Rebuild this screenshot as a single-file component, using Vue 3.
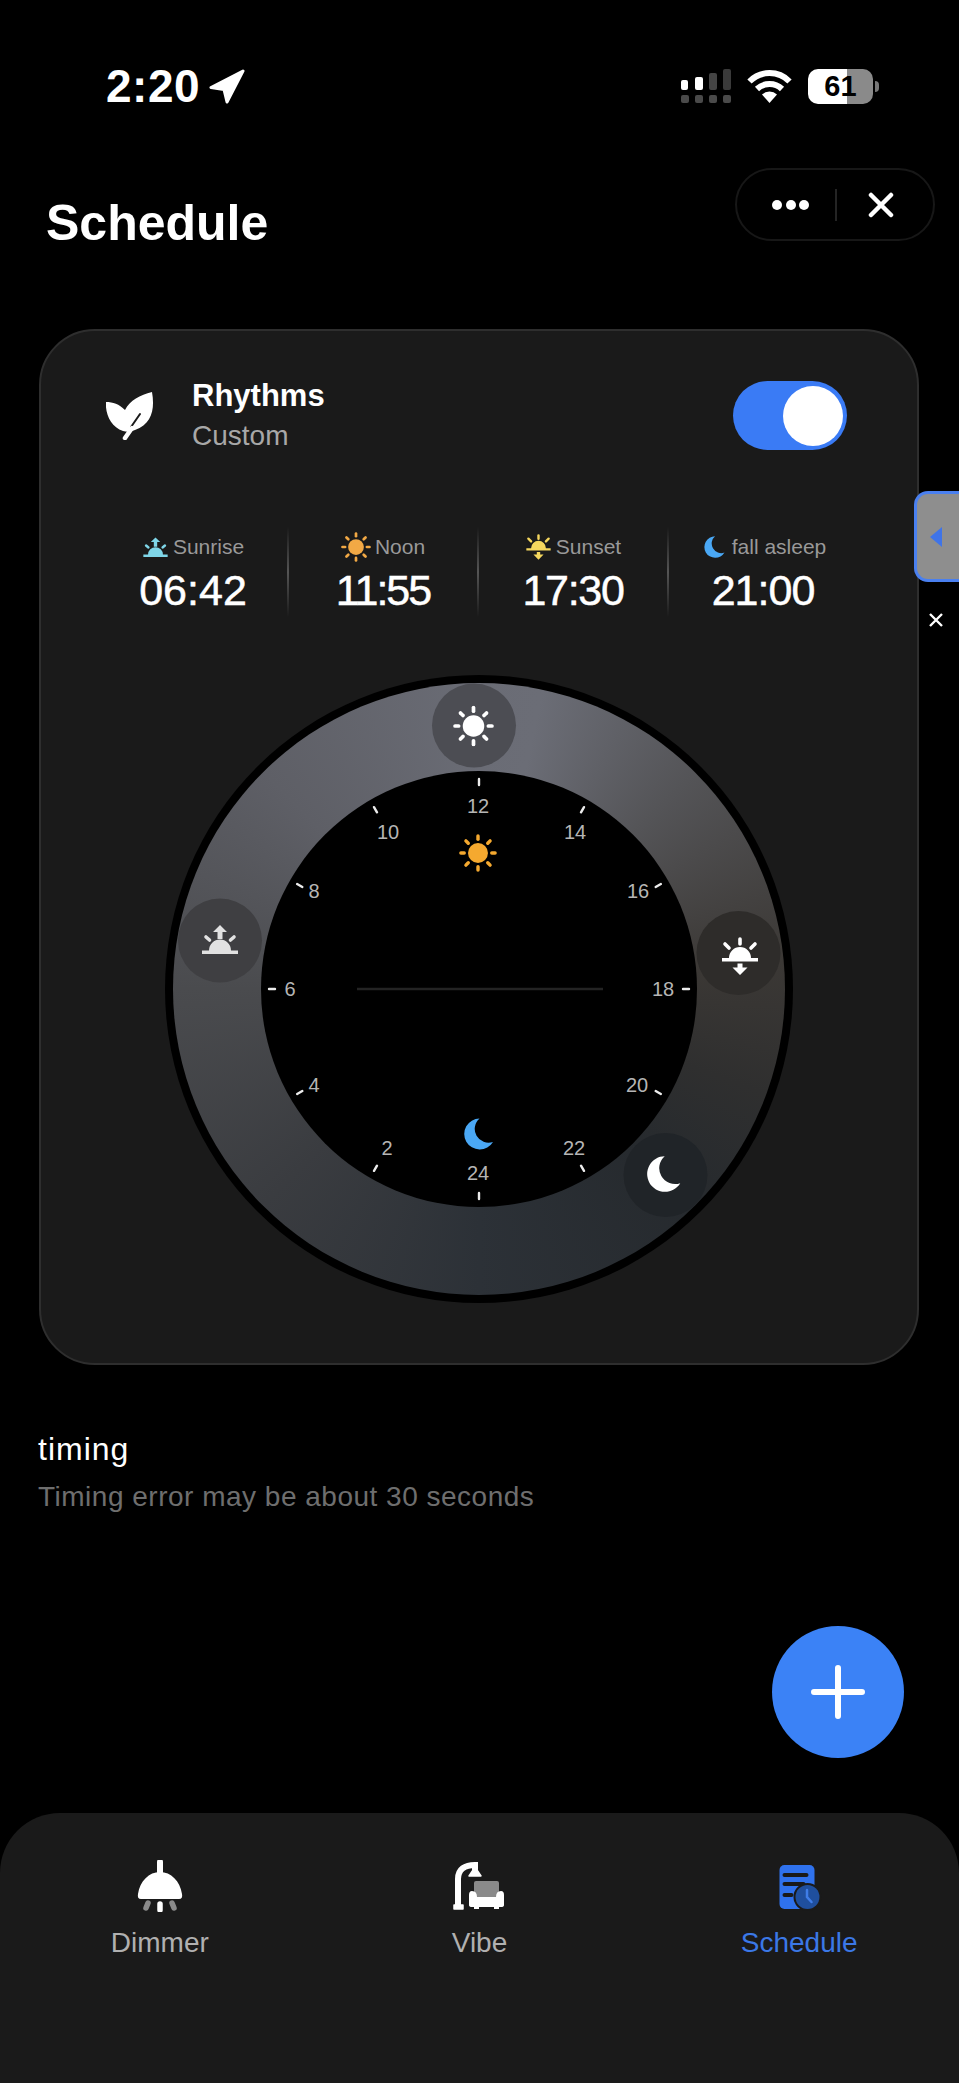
<template>
  <div class="page">
    <!-- shared icon shapes -->
    <svg class="defs" aria-hidden="true">
      <symbol id="ic-sun" viewBox="-20 -20 40 40">
        <circle r="10.5" fill="currentColor" />
        <line
          v-for="r in sunRays"
          :key="r.x1"
          :x1="r.x1"
          :y1="r.y1"
          :x2="r.x2"
          :y2="r.y2"
          stroke="currentColor"
          stroke-width="3.600"
          stroke-linecap="round"
        />
      </symbol>
      <symbol id="ic-sunrise" viewBox="-20 -20 40 40">
        <path fill="currentColor" d="M-11 10.500A11 11 0 0 1 11 10.500ZM-18 10.500H18V14H-18ZM0 -15L7 -8H2.500V-1H-2.500V-8H-7Z" />
        <path stroke="currentColor" stroke-width="3.600" stroke-linecap="round" d="M-14 -3L-10.500 0M14 -3L10.500 0" />
      </symbol>
      <symbol id="ic-sunset" viewBox="-20 -20 40 40">
        <path fill="currentColor" d="M-11 1A11 11 0 0 1 11 1ZM-18 1H18V4.500H-18ZM-2.500 6.500H2.500V10.500H7.500L0 18L-7.500 10.500H-2.500Z" />
        <path stroke="currentColor" stroke-width="3.600" stroke-linecap="round" d="M0 -18V-13M-15 -13L-11 -9M15 -13L11 -9" />
      </symbol>
      <symbol id="ic-moon" viewBox="-20 -20 40 40">
        <path fill="currentColor" d="M1.500 -15.500A15.500 15.500 0 1 0 15 8A13.800 13.800 0 0 1 1.500 -15.500Z" />
      </symbol>
    </svg>

    <div class="status">
      <div class="status-left">
        <span class="clock">2:20</span>
        <svg class="loc" width="36" height="35" viewBox="0 0 36 35">
          <path d="M34 2L2 18.500L15 20.500L18 33Z" fill="#fff" stroke="#fff" stroke-width="3" stroke-linejoin="round" />
        </svg>
      </div>
      <div class="status-right">
        <svg width="50" height="35" viewBox="0 0 50 35">
          <rect x="0" y="11" width="7" height="10" rx="2" fill="#fff" />
          <rect x="14" y="8" width="8" height="13" rx="2" fill="#fff" />
          <rect x="28" y="4" width="8" height="17" rx="2" fill="#444" />
          <rect x="42" y="0" width="8" height="21" rx="2" fill="#3a3a3a" />
          <rect v-for="x in [0, 14, 28, 42]" :key="x" :x="x" y="26" width="8" height="8" rx="2" fill="#4a4a4a" />
        </svg>
        <svg width="45" height="33" viewBox="0 0 45 33">
          <path d="M2.500 11.500A28 28 0 0 1 42.500 11.500M10 19A18 18 0 0 1 35 19" fill="none" stroke="#fff" stroke-width="6" />
          <path d="M22.500 33L15 24.500A11 11 0 0 1 30 24.500Z" fill="#fff" />
        </svg>
        <div class="battery">61</div>
      </div>
    </div>

    <div class="top">
      <h1 class="title">Schedule</h1>
      <div class="capsule">
        <div class="dots"><i /><i /><i /></div>
        <span class="cap-line" />
        <svg width="26" height="26" viewBox="0 0 26 26">
          <path d="M3 3L23 23M23 3L3 23" stroke="#fff" stroke-width="4.500" stroke-linecap="round" />
        </svg>
      </div>
    </div>

    <section class="card">
      <div class="card-head">
        <svg class="leaf" width="48" height="48" viewBox="10 11 48 48">
          <path fill="#fff" d="M56 11C59 28 56 43 39 49C34 51 31 51 27 50C15 46 9 33 10 21C17 21 23 23 29 29C34 19 44 14 56 11Z" />
          <path d="M44 33L35 46" stroke="#1a1a1a" stroke-width="2" stroke-linecap="round" />
          <path d="M36 47L29 57" stroke="#fff" stroke-width="4.500" stroke-linecap="round" />
        </svg>
        <div class="head-text">
          <div class="head-name">Rhythms</div>
          <div class="head-sub">Custom</div>
        </div>
        <div class="toggle"><span /></div>
      </div>

      <div class="stats">
        <div v-for="s in stats" :key="s.label" class="stat">
          <div class="stat-label">
            <svg :width="s.size" :height="s.size" :style="{ color: s.color }"><use :href="s.icon" /></svg>
            <span>{{ s.label }}</span>
          </div>
          <div class="stat-time" :style="{ letterSpacing: s.tight + 'px' }">{{ s.time }}</div>
        </div>
      </div>

      <div class="dial">
        <div class="ring"><div class="face" /></div>
        <svg class="overlay" width="628" height="628" viewBox="0 0 628 628">
          <line x1="192" y1="314" x2="438" y2="314" stroke="#232323" stroke-width="2.500" />
          <line
            v-for="t in ticks"
            :key="t.h"
            :x1="t.x1"
            :y1="t.y1"
            :x2="t.x2"
            :y2="t.y2"
            stroke="#ececec"
            stroke-width="2.400"
            stroke-linecap="round"
          />
          <text
            v-for="l in labels"
            :key="l.t"
            class="hour"
            :x="314 + l.x"
            :y="314 + l.y"
            text-anchor="middle"
            dominant-baseline="central"
          >{{ l.t }}</text>
          <circle v-for="k in knobs" :key="k.id" :cx="k.x" :cy="k.y" r="42" :fill="k.fill" />
          <use
            v-for="k in knobs"
            :key="k.id"
            :href="k.id"
            :x="k.ix - k.size / 2"
            :y="k.iy - k.size / 2"
            :width="k.size"
            :height="k.size"
            :style="{ color: k.color }"
          />
          <use href="#ic-sun" x="294" y="159" width="38" height="38" style="color: #f5a92f" />
          <use href="#ic-moon" x="293" y="439" width="40" height="40" style="color: #4aa8f5" />
        </svg>
      </div>
    </section>

    <div class="timing">
      <div class="timing-title">timing</div>
      <div class="timing-sub">Timing error may be about 30 seconds</div>
    </div>

    <!-- floating things on top -->
    <div class="side-tab"><span /></div>
    <svg class="side-x" width="16" height="16" viewBox="0 0 16 16">
      <path d="M2 2L14 14M14 2L2 14" stroke="#fff" stroke-width="2.400" />
    </svg>
    <button class="fab">
      <svg width="54" height="54" viewBox="0 0 54 54">
        <path d="M27 3V51M3 27H51" stroke="#fff" stroke-width="6" stroke-linecap="round" />
      </svg>
    </button>

    <nav class="tabbar">
      <div class="tab">
        <svg width="80" height="52" viewBox="0 10 80 52">
          <path d="M40 12V25" stroke="#fff" stroke-width="6" stroke-linecap="round" />
          <path fill="#fff" d="M18 44C20 31 29 22 40 22C51 22 60 31 62 44Q63 49 59 49H21Q17 49 18 44Z" />
          <path d="M40 54V60" stroke="#fff" stroke-width="5.500" stroke-linecap="round" />
          <path d="M28 53L26 58M52 53L54 58" stroke="#8a8a8a" stroke-width="5.500" stroke-linecap="round" />
        </svg>
        <span>Dimmer</span>
      </div>
      <div class="tab">
        <svg width="70" height="52" viewBox="0 5 70 52">
          <path d="M14 51V24C14 14 21 10 31 10V14" fill="none" stroke="#fff" stroke-width="6" stroke-linecap="round" />
          <path d="M10 50H19V54H10ZM25 21L31 12L37 21Z" fill="#fff" stroke="#fff" stroke-width="1.500" stroke-linejoin="round" />
          <rect x="30" y="26" width="25" height="17" rx="2" fill="#8a8a8a" />
          <path fill="#fff" d="M28 36Q33 36 33 42H52Q52 36 57 36Q60 36 60 40V50Q60 52 57 52H55V54H50V52H35V54H30V52H28Q25 52 25 50V40Q25 36 28 36Z" />
        </svg>
        <span>Vibe</span>
      </div>
      <div class="tab tab-active">
        <svg width="60" height="52" viewBox="1.500 0 60 52">
          <rect x="12" y="5" width="35" height="44" rx="5" fill="#2f72ee" />
          <path d="M17 15H39M17 24H36M17 35H24" stroke="#1a1a1a" stroke-width="4" stroke-linecap="round" />
          <circle cx="40" cy="37" r="14" fill="#1a1a1a" />
          <circle cx="40" cy="37" r="12" fill="#1f4f9e" />
          <path d="M39.500 30V37L44 42" fill="none" stroke="#3f7de8" stroke-width="2.500" stroke-linecap="round" />
        </svg>
        <span>Schedule</span>
      </div>
    </nav>
  </div>
</template>

<script setup>
const pointOn = (deg, r) => {
  const a = (deg * Math.PI) / 180
  return [Math.sin(a) * r, -Math.cos(a) * r]
}

const sunRays = [0, 45, 90, 135, 180, 225, 270, 315].map((deg) => {
  const [x1, y1] = pointOn(deg, 14.5)
  const [x2, y2] = pointOn(deg, 18)
  return { x1, y1, x2, y2 }
})

const stats = [
  { label: 'Sunrise', time: '06:42', icon: '#ic-sunrise', size: 27, color: '#7fd6e8', tight: 0 },
  { label: 'Noon', time: '11:55', icon: '#ic-sun', size: 30, color: '#f2a945', tight: -2 },
  { label: 'Sunset', time: '17:30', icon: '#ic-sunset', size: 27, color: '#f5d75e', tight: -1.3 },
  { label: 'fall asleep', time: '21:00', icon: '#ic-moon', size: 28, color: '#4aa8f5', tight: -1 }
]

// 12 is at the top, 18 on the right
const ticks = [2, 4, 6, 8, 10, 12, 14, 16, 18, 20, 22, 24].map((h) => {
  const deg = (h - 12) * 15
  const [ax, ay] = pointOn(deg, 204)
  const [bx, by] = pointOn(deg, 210)
  return { h, x1: 314 + ax, y1: 314 + ay, x2: 314 + bx, y2: 314 + by }
})

const labels = [
  { t: '12', x: -1, y: -183 },
  { t: '14', x: 96, y: -157 },
  { t: '16', x: 159, y: -98 },
  { t: '18', x: 184, y: 0 },
  { t: '20', x: 158, y: 96 },
  { t: '22', x: 95, y: 159 },
  { t: '24', x: -1, y: 184 },
  { t: '2', x: -92, y: 159 },
  { t: '4', x: -165, y: 96 },
  { t: '6', x: -189, y: 0 },
  { t: '8', x: -165, y: -98 },
  { t: '10', x: -91, y: -157 }
]

const knobs = [
  { id: '#ic-sun', x: 309, y: 50.5, ix: 308.5, iy: 51, size: 41, fill: '#4c4d53', color: '#fff' },
  { id: '#ic-sunrise', x: 55, y: 265.5, ix: 55, iy: 265, size: 40, fill: '#3f3f42', color: '#e2e2e2' },
  { id: '#ic-sunset', x: 573.5, y: 278, ix: 575, iy: 282, size: 40, fill: '#2e2c2a', color: '#fff' },
  { id: '#ic-moon', x: 500.5, y: 500, ix: 498, iy: 499, size: 46, fill: '#202428', color: '#fff' }
]
</script>

<style>
html,
body {
  background: #000;
}
</style>

<style scoped>
.page {
  position: relative;
  width: 959px;
  height: 2083px;
  display: flex;
  flex-direction: column;
  overflow: hidden;
  background: #000;
  color: #fff;
  font-family: "Liberation Sans", Arial, sans-serif;
}

.defs {
  position: absolute;
  width: 0;
  height: 0;
}

/* status bar */
.status {
  display: flex;
  justify-content: space-between;
  align-items: center;
  height: 35px;
  margin-top: 69px;
  padding: 0 86px 0 106px;
}

.status-left {
  display: flex;
  align-items: center;
  gap: 9px;
}

.clock {
  font-size: 46px;
  font-weight: 700;
  line-height: 35px;
  letter-spacing: 0.5px;
}

.status-right {
  display: flex;
  align-items: center;
  gap: 16px;
}

.battery {
  position: relative;
  width: 65px;
  height: 35px;
  border-radius: 10px;
  background: linear-gradient(90deg, #fff 60%, #8a8a8a 60%);
  color: #000;
  font-size: 29px;
  font-weight: 700;
  line-height: 35px;
  text-align: center;
}

.battery::after {
  content: '';
  position: absolute;
  top: 12px;
  right: -6px;
  width: 4px;
  height: 11px;
  border-radius: 0 4px 4px 0;
  background: #777;
}

/* title row */
.top {
  display: flex;
  justify-content: space-between;
  align-items: flex-start;
  margin-top: 64px;
  padding: 0 24px 0 46px;
}

.title {
  margin: 30px 0 0;
  font-size: 50px;
  font-weight: 700;
  line-height: 50px;
}

.capsule {
  display: flex;
  align-items: center;
  box-sizing: border-box;
  width: 200px;
  height: 73px;
  padding-left: 35px;
  border: 2px solid #171717;
  border-radius: 37px;
}

.dots {
  display: flex;
  gap: 3.5px;
}

.dots i {
  width: 10px;
  height: 10px;
  border-radius: 50%;
  background: #fff;
}

.cap-line {
  width: 2px;
  height: 32px;
  margin: 0 31px 0 26px;
  background: #242424;
}

/* card */
.card {
  box-sizing: border-box;
  width: 880px;
  margin: 81px 0 0 39px;
  padding: 47px 0 60px;
  border: 2px solid #2e2e2e;
  border-radius: 56px;
  background: #1a1a1a;
}

.card-head {
  display: flex;
  align-items: center;
  padding: 0 70px 0 65px;
}

.leaf {
  flex: none;
}

.head-text {
  flex: 1;
  margin-left: 38px;
}

.head-name {
  margin-bottom: 5px;
  font-size: 31px;
  font-weight: 700;
  line-height: 36px;
}

.head-sub {
  color: #a8a8a8;
  font-size: 28px;
  line-height: 34px;
}

.toggle {
  display: flex;
  justify-content: flex-end;
  align-items: center;
  width: 114px;
  height: 69px;
  padding-right: 4px;
  box-sizing: border-box;
  border-radius: 35px;
  background: #3a7bf5;
}

.toggle span {
  width: 60px;
  height: 60px;
  border-radius: 50%;
  background: #fff;
}

.stats {
  display: grid;
  grid-template-columns: repeat(4, 190px);
  margin: 74px 0 0 57px;
}

.stat {
  position: relative;
  box-sizing: border-box;
  height: 90px;
  padding-top: 6px;
  text-align: center;
}

.stat + .stat::before {
  content: '';
  position: absolute;
  top: 0;
  bottom: 0;
  left: -1px;
  width: 2px;
  background: linear-gradient(180deg, transparent, #555 50%, transparent);
}

.stat-label {
  display: flex;
  justify-content: center;
  align-items: center;
  gap: 4px;
  height: 28px;
  color: #999;
  font-size: 21px;
  line-height: 28px;
}

.stat-time {
  margin-top: 6px;
  font-size: 43px;
  line-height: 46px;
  -webkit-text-stroke: 0.5px #fff;
}

/* dial */
.dial {
  position: relative;
  box-sizing: border-box;
  width: 628px;
  height: 628px;
  margin: 58px auto 0;
  padding: 8px;
  border-radius: 50%;
  background: #000;
}

.ring {
  display: flex;
  justify-content: center;
  align-items: center;
  width: 100%;
  height: 100%;
  border-radius: 50%;
  background: conic-gradient(
    #6a6c75 0deg,
    #6b6d76 12deg,
    #545457 45deg,
    #3b3835 85deg,
    #2f2f2f 110deg,
    #262a2e 135deg,
    #2c3137 180deg,
    #3a3c40 225deg,
    #4a4b4e 270deg,
    #5e5f66 315deg,
    #6a6c75 360deg
  );
}

.face {
  width: 436px;
  height: 436px;
  border-radius: 50%;
  background: #000;
}

.overlay {
  position: absolute;
  top: 0;
  left: 0;
}

.hour {
  fill: #b5b5b5;
  font-size: 20px;
}

/* timing */
.timing {
  margin-top: 65px;
  padding-left: 38px;
}

.timing-title {
  font-size: 32px;
  line-height: 38px;
  letter-spacing: 1px;
}

.timing-sub {
  margin-top: 12px;
  color: #6e6e6e;
  font-size: 28px;
  line-height: 34px;
  letter-spacing: 0.5px;
}

/* overlays */
.side-tab {
  position: absolute;
  top: 491px;
  right: 0;
  display: flex;
  align-items: center;
  box-sizing: border-box;
  width: 45px;
  height: 91px;
  padding-left: 13px;
  border: 3px solid #4a80f0;
  border-right: 0;
  border-radius: 14px 0 0 14px;
  background: #8e8e8e;
}

.side-tab span {
  border-top: 10px solid transparent;
  border-right: 12px solid #3f74e8;
  border-bottom: 10px solid transparent;
}

.side-x {
  position: absolute;
  top: 612px;
  left: 928px;
}

.fab {
  position: absolute;
  top: 1626px;
  left: 772px;
  display: flex;
  justify-content: center;
  align-items: center;
  width: 132px;
  height: 132px;
  padding: 0;
  border: 0;
  border-radius: 50%;
  background: #3b82f6;
}

/* bottom tabs */
.tabbar {
  display: grid;
  grid-template-columns: repeat(3, 1fr);
  height: 270px;
  margin-top: auto;
  border-radius: 60px 60px 0 0;
  background: #1a1a1a;
}

.tab {
  display: flex;
  flex-direction: column;
  align-items: center;
  padding-top: 47px;
  color: #b0b0b0;
  font-size: 28px;
  line-height: 34px;
}

.tab span {
  margin-top: 14px;
}

.tab-active {
  color: #3b78e7;
}
</style>
